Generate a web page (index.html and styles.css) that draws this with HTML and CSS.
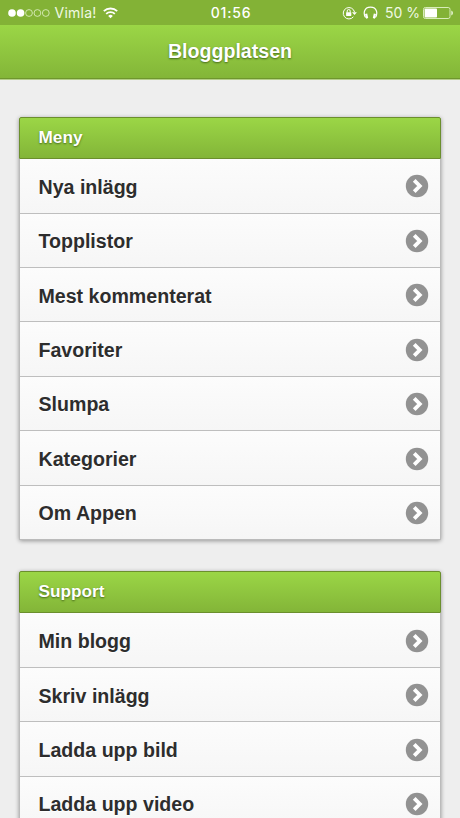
FILE: index.html
```html
<!DOCTYPE html>
<html lang="sv">
<head>
<meta charset="utf-8">
<title>Bloggplatsen</title>
<link rel="stylesheet" href="styles.css">
</head>
<body>
<svg width="0" height="0" class="defs">
  <symbol id="arrow" viewBox="0 0 24 24">
    <circle cx="12" cy="12" r="11.2" fill="#929292"/>
    <path d="M9.2 6.4l5.6 5.6-5.6 5.6" fill="none" stroke="#fff" stroke-width="3.8"/>
  </symbol>
</svg>
<div class="status">
  <div class="left">
    <svg width="43" height="10" viewBox="0 0 43 10">
      <g fill="#fff"><circle cx="4" cy="5" r="3.8"/><circle cx="12.6" cy="5" r="3.8"/></g>
      <g fill="none" stroke="#e3f2cb" stroke-width=".8"><circle cx="21" cy="5" r="3.4"/><circle cx="29.4" cy="5" r="3.4"/><circle cx="37.8" cy="5" r="3.4"/></g>
    </svg>
    <span class="carrier">Vimla!</span>
    <svg class="wifi" width="15" height="12" viewBox="0 0 15 12">
      <g fill="none" stroke="#fff" stroke-width="1.8"><path d="M.8 4.2a9.6 9.6 0 0 1 13.4 0"/><path d="M3.2 6.8a6.2 6.2 0 0 1 8.6 0"/></g>
      <path d="M5.2 8.9a3.3 3.3 0 0 1 4.6 0L7.5 11.3z" fill="#fff"/>
    </svg>
  </div>
  <div class="clock">01:56</div>
  <div class="right">
    <svg width="15" height="14" viewBox="0 0 15 14">
      <path d="M11.4 10.8A5.7 5.7 0 1 1 12.5 6" fill="none" stroke="#fff" stroke-width="1"/>
      <path d="M10 6.2h4.9l-2.4 2.9z" fill="#fff"/>
      <rect x="4.1" y="6.2" width="5.2" height="3.8" rx=".4" fill="#fff"/>
      <path d="M5.2 6.5V5a1.5 1.5 0 0 1 3 0v1.5" fill="none" stroke="#fff"/>
    </svg>
    <svg class="phones" width="15" height="14" viewBox="0 0 15 14">
      <path d="M2.6 11.5C.2 8 .6 1.2 7.5 1.2s7.3 6.8 4.9 10.3" fill="none" stroke="#fff" stroke-width="1.2"/>
      <path d="M2 8l2.2-.5 1 4.6-2.1.6zM13 8l-2.2-.5-1 4.6 2.1.6z" fill="#fff"/>
    </svg>
    <span class="percent">50 %</span>
    <svg class="battery" width="31" height="12" viewBox="0 0 31 12">
      <rect x=".5" y=".5" width="26.5" height="11" rx="1.8" fill="none" stroke="#d8ecb9"/>
      <rect x="1.6" y="1.5" width="12.4" height="9" rx=".8" fill="#fff"/>
      <path d="M28.3 3.5q1.7.6 1.7 2.5t-1.7 2.5z" fill="#e8f5d6"/>
    </svg>
  </div>
</div>
<header class="title">Bloggplatsen</header>
<main>
  <section class="list">
    <h2>Meny</h2>
    <ul>
      <li>Nya inlägg<svg><use href="#arrow"/></svg></li>
      <li>Topplistor<svg><use href="#arrow"/></svg></li>
      <li>Mest kommenterat<svg><use href="#arrow"/></svg></li>
      <li>Favoriter<svg><use href="#arrow"/></svg></li>
      <li>Slumpa<svg><use href="#arrow"/></svg></li>
      <li>Kategorier<svg><use href="#arrow"/></svg></li>
      <li>Om Appen<svg><use href="#arrow"/></svg></li>
    </ul>
  </section>
  <section class="list">
    <h2>Support</h2>
    <ul>
      <li>Min blogg<svg><use href="#arrow"/></svg></li>
      <li>Skriv inlägg<svg><use href="#arrow"/></svg></li>
      <li>Ladda upp bild<svg><use href="#arrow"/></svg></li>
      <li>Ladda upp video<svg><use href="#arrow"/></svg></li>
    </ul>
  </section>
</main>
</body>
</html>
```
FILE: styles.css
```css
* { box-sizing: border-box; }
body {
  margin: 0;
  height: 818px;
  overflow: hidden;
  background: #eeeeee;
  color: #2d2d2d;
  font-family: "Liberation Sans", Arial, sans-serif;
}
.defs { display: block; }
.status {
  height: 25px;
  padding: 1px 6px 0 8px;
  display: grid;
  grid-template-columns: 1fr auto 1fr;
  align-items: center;
  background: #83b236;
  color: #fff;
  font: 14px/24px Inter, sans-serif;
}
.left, .right { display: flex; align-items: center; }
.right { justify-content: flex-end; }
.carrier { margin-left: 3.5px; color: #f0f9e3; letter-spacing: .25px; }
.wifi { margin-left: 6.5px; }
.clock { font-weight: 500; letter-spacing: .8px; }
.phones { margin-left: 6.5px; }
.percent { margin: 0 3px 0 6.5px; color: #f0f9e3; }
.title {
  height: 55px;
  line-height: 52px;
  text-align: center;
  font-size: 19.6px;
  font-weight: bold;
  color: #fff;
  text-shadow: 0 1px 2px #44671a;
  background: linear-gradient(#9bd646, #83b538);
  border-bottom: 1px solid #b5cf8a;
  box-shadow: inset 0 -1px #6f962e;
}
main { padding: 36.5px 19px 0; }
.list {
  margin-bottom: 31.1px;
  border-radius: 2px;
  box-shadow: 0 1px 4px rgba(0, 0, 0, .38);
}
h2 {
  margin: 0;
  height: 42px;
  padding-left: 18.5px;
  border: 1px solid #6b8f2d;
  border-radius: 2px 2px 0 0;
  background: linear-gradient(#9bd646, #83b538);
  color: #fff;
  font-size: 17.2px;
  line-height: 39.6px;
  text-shadow: 0 1px 2px #44671a;
}
ul {
  margin: 0;
  padding: 0;
  list-style: none;
  border: 1px solid #bbb;
  border-top: 0;
}
li {
  height: 54.4px;
  padding: 3px 11px 0 18.5px;
  display: flex;
  align-items: center;
  justify-content: space-between;
  border-bottom: 1px solid #bebebe;
  background: linear-gradient(#fcfcfc, #f6f6f6);
  font-size: 19.6px;
  font-weight: bold;
  text-shadow: 0 1px 0 #fff;
}
li:first-child { height: 55.1px; }
li:last-child { height: 53.2px; border-bottom: 0; }
li svg { width: 24px; height: 24px; margin-top: -1.4px; }
```
